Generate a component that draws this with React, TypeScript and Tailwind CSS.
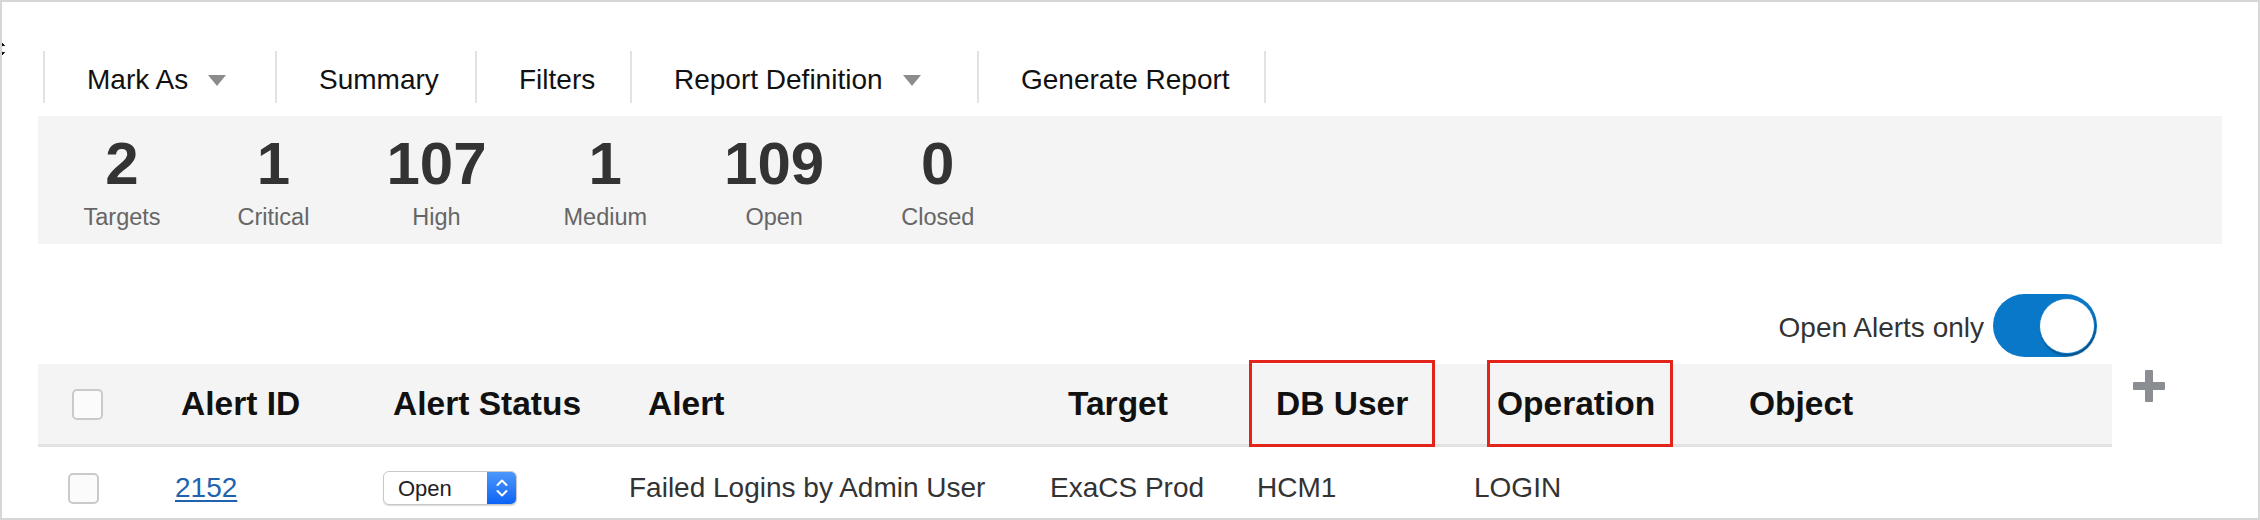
import React from 'react';

const toolbar = [
    { label: 'Mark As', width: 'w-[232px]', caret: true },
    { label: 'Summary', width: 'w-[200px]', caret: false },
    { label: 'Filters', width: 'w-[155px]', caret: false },
    { label: 'Report Definition', width: 'w-[347px]', caret: true },
    { label: 'Generate Report', width: 'w-[289px]', caret: false },
];

const stats = [
    { value: '2', label: 'Targets' },
    { value: '1', label: 'Critical' },
    { value: '107', label: 'High' },
    { value: '1', label: 'Medium' },
    { value: '109', label: 'Open' },
    { value: '0', label: 'Closed' },
];

const Caret = () => (
    <svg width="18" height="11" viewBox="0 0 18 11" className="ml-[20px] mt-[2px]">
        <polygon points="0,0 18,0 9,11" fill="#8c8c8c" />
    </svg>
);

const Checkbox = () => (
    <span className="block h-[31px] w-[31px] rounded-[5px] border-2 border-[#cacaca] bg-[#fbfbfb]" />
);

const StatusSelect = () => (
    <div className="flex h-[34px] w-[134px] items-stretch overflow-hidden rounded-[6px] border border-[#c8c8c8] bg-white shadow-[0_1px_1px_rgba(0,0,0,0.15)]">
        <span className="flex flex-1 items-center pl-[14px] text-[22px] text-[#222]">Open</span>
        <span className="flex w-[29px] items-center justify-center bg-gradient-to-b from-[#4c97fb] to-[#0a62f5]">
            <svg width="16" height="24" viewBox="0 0 16 24">
                <path d="M3.5 9 L8 4.5 L12.5 9" stroke="white" strokeWidth="2" fill="none" strokeLinecap="round" strokeLinejoin="round" />
                <path d="M3.5 15 L8 19.5 L12.5 15" stroke="white" strokeWidth="2" fill="none" strokeLinecap="round" strokeLinejoin="round" />
            </svg>
        </span>
    </div>
);

export default function App() {
    return (
        <div className="relative h-[520px] w-[2260px] overflow-hidden border-2 border-[#d6d6d6] bg-white font-['Liberation_Sans',Arial,sans-serif]">
            {/* mouse cursor peeking in from the left edge */}
            <svg width="12" height="24" viewBox="0 0 12 24" className="absolute left-[-4px] top-[36px]">
                <polygon points="0,0 8,8 3,9" fill="#111" stroke="white" strokeWidth="1" />
                <polygon points="0,22 8,14 3,13" fill="#111" stroke="white" strokeWidth="1" />
            </svg>

            {/* Toolbar */}
            <div className="ml-[41px] mt-[49px] flex h-[52px]">
                {toolbar.map((item, i) => (
                    <div
                        key={item.label}
                        className={`flex ${item.width} items-center border-l-2 border-[#e2e2e2] pl-[42px] pt-[5px] text-[28px] text-[#111] ${i === toolbar.length - 1 ? 'border-r-2' : ''}`}
                    >
                        <span>{item.label}</span>
                        {item.caret && <Caret />}
                    </div>
                ))}
            </div>

            {/* Summary counts */}
            <div className="mx-[36px] mt-[13px] flex h-[128px] bg-[#f4f4f4] pl-[7px] pt-[18px]">
                {stats.map((s) => (
                    <div key={s.label} className="flex flex-col items-center px-[38.5px]">
                        <span className="text-[60px] font-bold leading-[60px] text-[#333]">{s.value}</span>
                        <span className="mt-[12px] text-[23.5px] leading-none text-[#666]">{s.label}</span>
                    </div>
                ))}
            </div>

            {/* Open alerts toggle */}
            <div className="mt-[50px] flex h-[63px] items-center justify-end pr-[161px]">
                <span className="mr-[9px] pt-[4px] text-[28px] text-[#333]">Open Alerts only</span>
                <div className="relative h-[63px] w-[104px] rounded-full bg-[#0a78c8]">
                    <span className="absolute right-[2px] top-[3.5px] h-[56px] w-[56px] rounded-full border border-[#0a78c8] bg-white shadow-[1px_2px_2px_rgba(0,0,0,0.35)]" />
                </div>
            </div>

            {/* Alerts table */}
            <div className="mt-[7px] flex">
                <div className="ml-[36px] w-[2074px]">
                    <div className="grid h-[83px] grid-cols-[122px_205px_249px_421px_207px_217px_275px_1fr] items-center border-b-[3px] border-[#e2e2e2] bg-[#f4f4f4] text-[33.5px] font-bold text-[#111]">
                        <div className="pl-[34px]"><Checkbox /></div>
                        <div className="pl-[21px]">Alert ID</div>
                        <div className="pl-[28px]">Alert Status</div>
                        <div className="pl-[34px]">Alert</div>
                        <div className="pl-[33px]">Target</div>
                        <div className="relative flex h-full items-center pl-[34px]">
                            DB User
                            <span className="absolute left-[7px] top-[-4px] h-[87px] w-[186px] border-[3px] border-[#e3241b]" />
                        </div>
                        <div className="relative flex h-full items-center pl-[38px]">
                            Operation
                            <span className="absolute left-[28px] top-[-4px] h-[87px] w-[186px] border-[3px] border-[#e3241b]" />
                        </div>
                        <div className="pl-[15px]">Object</div>
                    </div>
                    <div className="grid h-[82px] grid-cols-[122px_205px_249px_421px_207px_217px_275px_1fr] items-center text-[28px] text-[#333]">
                        <div className="pl-[30px]"><Checkbox /></div>
                        <div className="pl-[15px]">
                            <a href="#" className="text-[#1f63ae] underline underline-offset-[3px]">2152</a>
                        </div>
                        <div className="pl-[18px]"><StatusSelect /></div>
                        <div className="pl-[15px]">Failed Logins by Admin User</div>
                        <div className="pl-[15px]">ExaCS Prod</div>
                        <div className="pl-[15px]">HCM1</div>
                        <div className="pl-[15px]">LOGIN</div>
                        <div />
                    </div>
                </div>
                <svg width="32" height="32" viewBox="0 0 32 32" className="ml-[21px] mt-[6px]">
                    <rect x="12" y="0" width="8" height="32" rx="1" fill="#8a8d91" />
                    <rect x="0" y="12" width="32" height="8" rx="1" fill="#8a8d91" />
                </svg>
            </div>
        </div>
    );
}
